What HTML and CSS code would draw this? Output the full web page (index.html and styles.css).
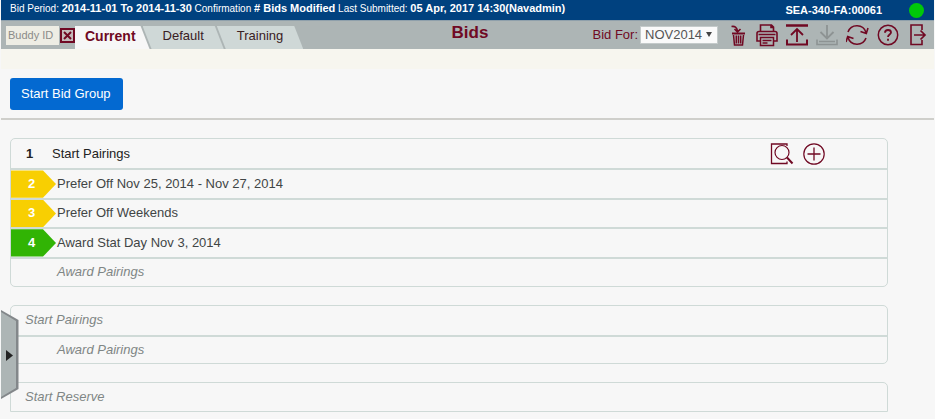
FILE: index.html
```html
<!DOCTYPE html>
<html lang="en">
<head>
<meta charset="utf-8">
<title>Bids</title>
<link rel="stylesheet" href="styles.css">
</head>
<body>
<header>
  <div class="status">
    <p class="status-text">Bid Period: <b>2014-11-01 To 2014-11-30</b> Confirmation <b># Bids Modified</b> Last Submitted: <b>05 Apr, 2017 14:30(Navadmin)</b></p>
    <p class="seat"><b>SEA-340-FA:00061</b></p>
    <span class="online" role="img" aria-label="Online"></span>
  </div>
  <div class="toolbar">
    <div class="left">
      <div class="buddy">
        <input type="text" placeholder="Buddy ID" aria-label="Buddy ID">
        <button type="button" class="clear" aria-label="Clear buddy">
          <svg viewBox="0 0 15 15" width="15" height="15"><rect x="1" y="1" width="13" height="13"/><path d="M4 4 11 11M11 4 4 11"/></svg>
        </button>
      </div>
      <nav class="tabs">
        <a href="#current" class="tab active" aria-current="page">Current</a>
        <a href="#default" class="tab">Default</a>
        <a href="#training" class="tab">Training</a>
      </nav>
    </div>
    <h1>Bids</h1>
    <div class="right">
      <div class="bid-for">
        <label for="period">Bid For:</label>
        <span class="select"><select id="period"><option>NOV2014</option></select></span>
      </div>
      <div class="tools">
        <button type="button" aria-label="Delete">
          <svg viewBox="-1 0 24 24" width="24" height="24"><path d="M4.500 3.500Q9.500 2.500 10.500 8M7.500 6 10.500 9 13.500 6" stroke-width="1.600"/><path d="M5 10.500H18" stroke-width="2"/><path d="M6.500 12 7.500 22H15.500L16.500 12M9.300 12.500V20.500M11.500 12.500V20.500M13.700 12.500V20.500" stroke-width="1.500"/></svg>
        </button>
        <button type="button" aria-label="Print">
          <svg viewBox="1 0 24 24" width="24" height="24"><path d="M5.500 8V2H16.500L18.500 4V8M16 2V4.500H18.500M5.500 18H2V10.500Q2 8.500 4 8.500H20Q22 8.500 22 10.500V18H18.500M3.500 11.500H20.500" stroke-width="1.600"/><path d="M5.500 14.500H18.500V22.500H5.500ZM7.500 17.500H16.500M7.500 20H12.500" stroke-width="1.500"/></svg>
        </button>
        <button type="button" aria-label="Upload">
          <svg viewBox="1 0 24 24" width="24" height="24"><path d="M1 2.500H23" stroke-width="2.500"/><path d="M12 19V6M6 12 12 6 18 12" stroke-width="1.800"/><path d="M2 16.500V21.500H22V16.500" stroke-width="2"/></svg>
        </button>
        <button type="button" disabled aria-label="Download">
          <svg viewBox="1 0 24 24" width="24" height="24"><path d="M12 2V15M5.500 9 12 15.500 18.500 9" stroke-width="1.800"/><path d="M2 16.500V21.500H22V16.500M4 18.500H20" stroke-width="1.600"/></svg>
        </button>
        <button type="button" aria-label="Refresh">
          <svg viewBox="1 0 24 24" width="24" height="24"><path d="M3 9A9.500 9.500 0 0 1 21 9.500M21 15A9.500 9.500 0 0 1 3 14.500M23 5 21.300 10.500 15.500 8.500M1 19 2.700 13.500 8.500 15.500" stroke-width="1.600"/></svg>
        </button>
        <button type="button" aria-label="Help">
          <svg viewBox="0 0 24 24" width="24" height="24"><circle cx="12" cy="12" r="9.700" stroke-width="1.500"/><path d="M9 9.700Q9 7 12 7T15 9.500C15 11.500 12 11.500 12 14M12 15.800V17.700" stroke-width="1.800"/></svg>
        </button>
        <button type="button" aria-label="Log out">
          <svg viewBox="0 0 24 24" width="24" height="24"><path d="M16 7V2H5V21.500H16V17" stroke-width="1.600"/><path d="M8 12H19M14.500 7.500 19 12 14.500 16.500" stroke-width="1.700"/></svg>
        </button>
      </div>
    </div>
  </div>
  <div class="band"></div>
</header>
<main>
  <div class="actions"><button type="button" class="primary">Start Bid Group</button></div>
  <div class="groups">
    <ol class="group full">
      <li><span class="num">1</span><span class="title">Start Pairings</span>
        <span class="row-tools">
          <button type="button" aria-label="Preview">
            <svg viewBox="0 0 24 24" width="24" height="24"><path d="M17 4V2H1.500V21.500H17V19.500" stroke-width="1.300"/><circle cx="12" cy="10.500" r="7" stroke-width="1.200"/><path d="M17 15.500 22.500 21.500" stroke-width="2"/></svg>
          </button>
          <button type="button" aria-label="Add">
            <svg viewBox="0 0 24 24" width="24" height="24"><circle cx="12" cy="12" r="10.200" stroke-width="1.200"/><path d="M12 5.500V18.500M5.500 12H18.500" stroke-width="1.300"/></svg>
          </button>
        </span>
      </li>
      <li><span class="badge yellow">2</span><span>Prefer Off Nov 25, 2014 - Nov 27, 2014</span></li>
      <li><span class="badge yellow">3</span><span>Prefer Off Weekends</span></li>
      <li><span class="badge green">4</span><span>Award Stat Day Nov 3, 2014</span></li>
      <li class="ghost nested">Award Pairings</li>
    </ol>
    <ol class="group">
      <li class="ghost">Start Pairings</li>
      <li class="ghost nested">Award Pairings</li>
    </ol>
    <ol class="group open">
      <li class="ghost">Start Reserve</li>
    </ol>
  </div>
</main>
<button type="button" class="drawer" aria-label="Open side panel">
  <svg viewBox="0 0 19 92" width="19" height="92"><path class="shade" d="M0 1 17.500 11V80L0 90Z"/><path class="face" d="M0 3 15 12V79L0 88Z"/><path class="arrow" d="M5 41 12 46.500 5 52Z"/></svg>
</button>
</body>
</html>
```
FILE: styles.css
```css
* { box-sizing: border-box; }
body {
  margin: 0;
  padding: 0 1px;
  background: #f7f7f7;
  color: #414545;
  font: 13px/16px "Liberation Sans", Arial, sans-serif;
  overflow: hidden;
}
p, h1, ol { margin: 0; padding: 0; }
button, input, select { font: inherit; margin: 0; padding: 0; border: 0; }
button { background: none; display: flex; color: inherit; }
svg { display: block; fill: none; stroke: #700923; }

.status {
  display: flex;
  align-items: center;
  height: 20px;
  padding: 0 10px 0 9px;
  background: #00417f;
  color: #fff;
  font-size: 10px;
}
.status b { font-size: 11px; }
.status-text { flex: 1; white-space: nowrap; line-height: 16px; align-self: flex-start; }
.seat { margin-right: 27px; }
.online { width: 15px; height: 15px; border-radius: 50%; background: #00c80a; }

.toolbar {
  display: grid;
  grid-template-columns: 1fr auto 1fr;
  height: 29px;
  padding-left: 5px;
  background: #adb5b5;
  border-top: 1px solid #8fa0ab;
}
.left { display: flex; }
.right { display: flex; justify-content: flex-end; }
.buddy { display: flex; align-items: center; gap: 1px; }
.buddy input {
  width: 53px;
  height: 19px;
  padding: 0 2px;
  background: #eeede4;
  font-size: 11px;
}
.buddy input::placeholder { color: #8b8b88; opacity: 1; }
.clear rect { stroke-width: 2; fill: #c5bcbc; }
.clear path { stroke-width: 2; }

.tabs { display: flex; align-items: flex-end; }
.tab {
  height: 23px;
  padding: 0 20px;
  margin-left: -7px;
  background: #cfd8d7;
  color: #3a2024;
  line-height: 20px;
  text-decoration: none;
  clip-path: polygon(0 0, calc(100% - 9px) 0, 100% 100%, 9px 100%);
}
.tab.active {
  margin-left: 0;
  padding: 0 14px 0 10px;
  background: #f7f7f7;
  color: #700923;
  font-size: 14px;
  font-weight: bold;
  clip-path: polygon(0 0, calc(100% - 9px) 0, 100% 100%, 0 100%);
}
h1 { color: #700923; font-size: 17px; line-height: 24px; }
.bid-for { display: flex; align-items: center; gap: 2px; color: #700923; padding-bottom: 1px; }
.select { position: relative; }
.select select {
  appearance: none;
  display: block;
  width: 78px;
  height: 18px;
  padding: 0 4px;
  background: #fafafa;
  border: 1px solid #c4caca;
  color: #555;
}
.select::after {
  content: "";
  position: absolute;
  right: 6px;
  top: 6px;
  border: solid transparent;
  border-width: 5px 3px 0;
  border-top-color: #444;
  pointer-events: none;
}
.tools { display: flex; align-items: center; padding: 0 1px 0 5px; }
.tools button { width: 30px; justify-content: center; }
.tools button:disabled svg { stroke: #8d9393; }
.band { height: 20px; background: #f7f6ef; }

.actions {
  padding: 9px 9px 8px;
  border-bottom: 2px solid #cfcfcb;
}
.primary {
  height: 32px;
  padding: 0 12px 0 11px;
  align-items: center;
  background: #0369d1;
  border-radius: 3px;
  color: #fff;
}
.groups {
  display: flex;
  flex-direction: column;
  gap: 18px;
  padding: 18px 46px 8px 9px;
}
.group {
  display: grid;
  grid-auto-rows: 1fr;
  min-height: 59px;
  border: 1px solid #cfdad7;
  border-radius: 5px;
  list-style: none;
  overflow: hidden;
}
.group.full { min-height: 149px; }
.group.open { min-height: 30px; border-radius: 5px 5px 0 0; }
.group li { display: flex; align-items: center; }
.group li + li { border-top: 2px solid #cfdad7; }
.group .ghost { padding-left: 14px; color: #7f8685; font-style: italic; }
.group .nested { padding-left: 46px; }
.num { width: 41px; padding-left: 15px; color: #222; font-weight: bold; }
.title { flex: 1; color: #222; }
.row-tools { display: flex; gap: 8px; padding-right: 61px; }
.badge {
  display: flex;
  align-items: center;
  align-self: stretch;
  width: 46px;
  padding-left: 17px;
  color: #fff;
  font-weight: bold;
  clip-path: polygon(0 0, 32px 0, 45px 50%, 32px 100%, 0 100%);
}
.yellow { background: #f8cf02; }
.green { background: #31b404; }

.drawer { position: absolute; left: 1px; top: 309px; }
.drawer svg { stroke: none; }
.drawer .shade { fill: #83878a; }
.drawer .face { fill: #adb5b5; }
.drawer .arrow { fill: #222; }
```
